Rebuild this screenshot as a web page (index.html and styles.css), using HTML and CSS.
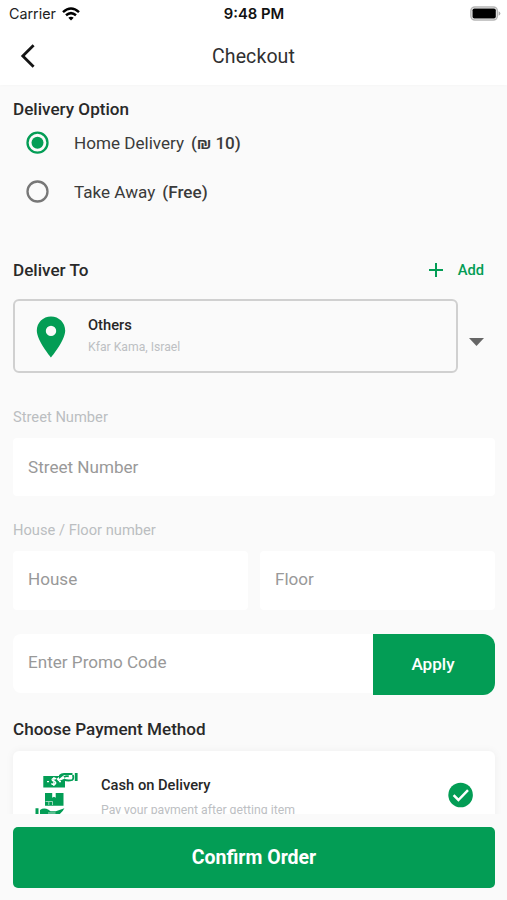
FILE: index.html
```html
<!DOCTYPE html>
<html lang="en">
<head>
<meta charset="utf-8">
<title>Checkout</title>
<link rel="stylesheet" href="styles.css">
</head>
<body>
<div class="screen">
  <header class="top">
    <div class="status">
      <div class="carrier"><span>Carrier</span>
        <svg width="18" height="14" viewBox="0 0 18 14" fill="none" stroke="#000" stroke-width="2.5"><path d="M1 5.1Q9-2.2 17 5.1M4 8.3q5-4.3 10 0"/><path d="M6.3 10.7q2.7-2.1 5.4 0L9 13.5z" fill="#000" stroke="none"/></svg>
      </div>
      <span class="clock">9:48 PM</span>
      <svg class="battery" width="31" height="15" viewBox="0 0 31 15"><rect x=".9" y=".9" width="26.4" height="13.2" rx="4" fill="#fff" stroke="#b5b5b5" stroke-width="1.5"/><rect x="2.500" y="2.500" width="23.3" height="10" rx="1.8"/><path d="M28.6 5.3q1.8.8 1.8 2.2t-1.8 2.2z" fill="#aaa"/></svg>
    </div>
    <div class="nav">
      <svg class="back" width="16" height="26" viewBox="0 0 16 26" fill="none" stroke="#151515" stroke-width="2.8"><path d="M13.6 2.2 2.8 13l10.8 10.8"/></svg>
      <h1>Checkout</h1>
    </div>
  </header>

  <main class="content">
    <h2 class="option-title">Delivery Option</h2>
    <div class="option">
      <svg width="24" height="24" viewBox="0 0 24 24"><circle cx="11.500" cy="11.700" r="10" fill="none" stroke="#039d55" stroke-width="2.3"/><circle cx="11.500" cy="11.700" r="6" fill="#039d55"/></svg>
      <span class="option-name">Home Delivery</span><span class="price">(₪ 10)</span>
    </div>
    <div class="option">
      <svg width="24" height="24" viewBox="0 0 24 24"><circle cx="11.500" cy="11.500" r="10" fill="none" stroke="#777" stroke-width="2.3"/></svg>
      <span class="option-name">Take Away</span><span class="price">(Free)</span>
    </div>

    <div class="deliver-head">
      <h2>Deliver To</h2>
      <div class="add">
        <svg width="16" height="16" viewBox="0 0 16 16" stroke="#039d55" stroke-width="2"><path d="M8 1v14M1 8h14"/></svg>
        <span>Add</span>
      </div>
    </div>
    <div class="address-row">
      <div class="address">
        <svg width="30" height="42" viewBox="0 0 30 42"><path fill="#039d55" fill-rule="evenodd" d="M15 .5C7 .5.8 6.7.8 14.6.8 24.8 15 41.5 15 41.5s14.200-16.700 14.200-26.900C29.200 6.700 23 .5 15 .5zm0 9.200a5.200 5.200 0 1 1 0 10.400 5.200 5.200 0 0 1 0-10.400z"/></svg>
        <div class="address-text"><h3>Others</h3><p>Kfar Kama, Israel</p></div>
      </div>
      <svg class="caret" width="15" height="8" viewBox="0 0 15 8"><path d="M0 0h15L7.500 8z" fill="#666"/></svg>
    </div>

    <div class="label">Street Number</div>
    <div class="field">Street Number</div>
    <div class="label second">House / Floor number</div>
    <div class="pair">
      <div class="field">House</div>
      <div class="field">Floor</div>
    </div>
    <div class="promo">
      <div class="field">Enter Promo Code</div>
      <div class="apply">Apply</div>
    </div>

    <h2 class="pay-title">Choose Payment Method</h2>
    <div class="payment">
      <svg class="cash" width="44" height="44" viewBox="0 0 44 44" fill="#039d55">
        <path d="M8.300 4H25l-3.500 3 2 2.200L30 6.500V15.500H8.300z"/>
        <path d="M24 3q2-2 5-2h8.500v2h-8.300L24 7z"/><path d="M39.800 1h2.800v8h-2.800z"/>
        <path d="M29 5.200q2-1.800 4.800-.8M29 7.600q3.500 1.600 8.300.4 1.700-2 .6-5" fill="none" stroke="#039d55" stroke-width="1.800"/>
        <path d="M21.200 7q-1-.9-2.400-.7c-2.600.4-2 2.700.3 3.100s2.400 3-.3 3.100q-1.500 0-2.400-1M18.900 5v9M12 9.700h2M24 9.700h2" fill="none" stroke="#fff" stroke-width="1.300"/>
        <path d="M10 21h7.200v4.700l1.800-1 1.700 1V21h7.800v12.700H10z"/>
        <path d="M10.500 29.500h7M13.800 30v3M17.500 29.500v3.500" fill="none" stroke="#fff" stroke-opacity=".75" stroke-width=".8"/>
        <path d="M.5 36.300h3V44h-3zM5 38q4-2.800 8.500-.2l2 1.500h5.300l8.600-3q-2 4.500-7.500 7.700H5z"/>
        <path d="M13 41h7.500" stroke="#fff" stroke-width=".7"/>
      </svg>
      <div class="pay-text"><h3>Cash on Delivery</h3><p>Pay your payment after getting item</p></div>
      <svg class="check" width="26" height="26" viewBox="0 0 26 26"><circle cx="12.600" cy="13" r="12.300" fill="#039d55"/><path d="m5.600 13.200 4.800 4.800 9.600-9.800" fill="none" stroke="#fff" stroke-width="2.500"/></svg>
    </div>
  </main>
  <footer><div class="confirm">Confirm Order</div></footer>
</div>
</body>
</html>
```
FILE: styles.css
```css
* { box-sizing: border-box; }
body { margin: 0; font-family: Roboto, "Liberation Sans", sans-serif; color: #2b2b2b; }
h1, h2, h3, p { margin: 0; }
svg { display: block; flex: none; }
.screen { width: 507px; height: 900px; display: flex; flex-direction: column; background: #fafafa; overflow: hidden; }
.top { height: 85px; flex: none; background: #fff; box-shadow: 0 1px 3px rgba(0,0,0,.02); }
.status { height: 27px; display: grid; grid-template-columns: 1fr auto 1fr; align-items: center; padding: 0 6px 0 9px; font-family: Inter, sans-serif; }
.carrier { display: flex; align-items: center; gap: 6px; font-size: 14.3px; color: #222; }
.clock { font-size: 14.8px; font-weight: 600; color: #111; margin-left: -2px; }
.battery { justify-self: end; }
.nav { height: 57px; display: grid; grid-template-columns: 1fr auto 1fr; align-items: center; }
.back { margin-left: 20px; }
h1 { font-size: 19.5px; line-height: 24px; font-weight: 400; letter-spacing: .1px; color: #303030; padding-top: 2px; }
.content { flex: none; height: 729px; padding: 0 12px 0 13px; overflow: hidden; }
h2 { font-size: 17.1px; line-height: 24px; font-weight: 500; color: #292929; }
.option-title { margin-top: 12px; }
.option { height: 49px; display: flex; align-items: center; padding-left: 13px; font-size: 17.1px; color: #3b3b3b; }
.option-title + .option { margin-top: -3px; }
.option-name { margin-left: 24px; }
.price { margin-left: 7px; font-weight: 500; }
.deliver-head { margin-top: 30px; height: 48px; display: flex; align-items: center; justify-content: space-between; }
.add { display: flex; align-items: center; gap: 14px; padding-right: 11px; color: #039d55; font-size: 14.7px; font-weight: 500; }
.address-row { margin-top: 5px; display: flex; align-items: center; gap: 11px; }
.address { width: 445px; height: 74px; border: 2px solid #d0d0d0; border-radius: 6px; display: flex; align-items: center; gap: 22px; padding-left: 21px; }
.address svg { margin-top: 1px; }
.address-text { margin-top: -2px; }
h3 { font-size: 14.7px; line-height: 20px; font-weight: 500; color: #272727; }
.address p { margin-top: 3px; font-size: 12.2px; line-height: 18px; color: #bdc0c3; }
.caret { margin-top: 12px; }
.label { height: 24px; line-height: 24px; margin-top: 32px; font-size: 14.7px; color: #bbbec1; }
.field { height: 58px; margin-top: 9px; padding-left: 15px; line-height: 58px; background: #fff; border-radius: 4px; font-size: 17.1px; color: #999; }
.label.second { margin-top: 22px; }
.pair { display: grid; grid-template-columns: 1fr 1fr; gap: 12px; margin-top: 9px; }
.pair .field { margin: 0; height: 59px; line-height: 57px; }
.promo { display: flex; margin-top: 24px; }
.promo .field { flex: 1; height: 59px; line-height: 56px; margin: 0; border-radius: 8px 0 0 8px; }
.apply { width: 122px; height: 61px; border-radius: 0 12px 12px 0; background: #039d55; color: #fff; font-size: 17.1px; font-weight: 500; line-height: 60px; text-align: center; padding-right: 2px; }
.pay-title { margin-top: 22px; }
.payment { height: 90px; margin-top: 10px; display: flex; align-items: flex-start; background: #fff; border-radius: 6px; box-shadow: 0 0 8px rgba(0,0,0,.05); padding: 0 21px 0 22px; }
.cash { margin-top: 21px; }
.pay-text { margin: 24px auto 0 22px; }
.pay-text p { margin-top: 6px; font-size: 12.25px; line-height: 18px; color: #bdc0c3; }
.check { margin-top: 31px; }
footer { padding: 13px 12px 0 13px; }
.confirm { height: 61px; line-height: 61px; border-radius: 5px; background: #039d55; color: #fff; font-size: 19.5px; font-weight: 700; text-align: center; }
```
